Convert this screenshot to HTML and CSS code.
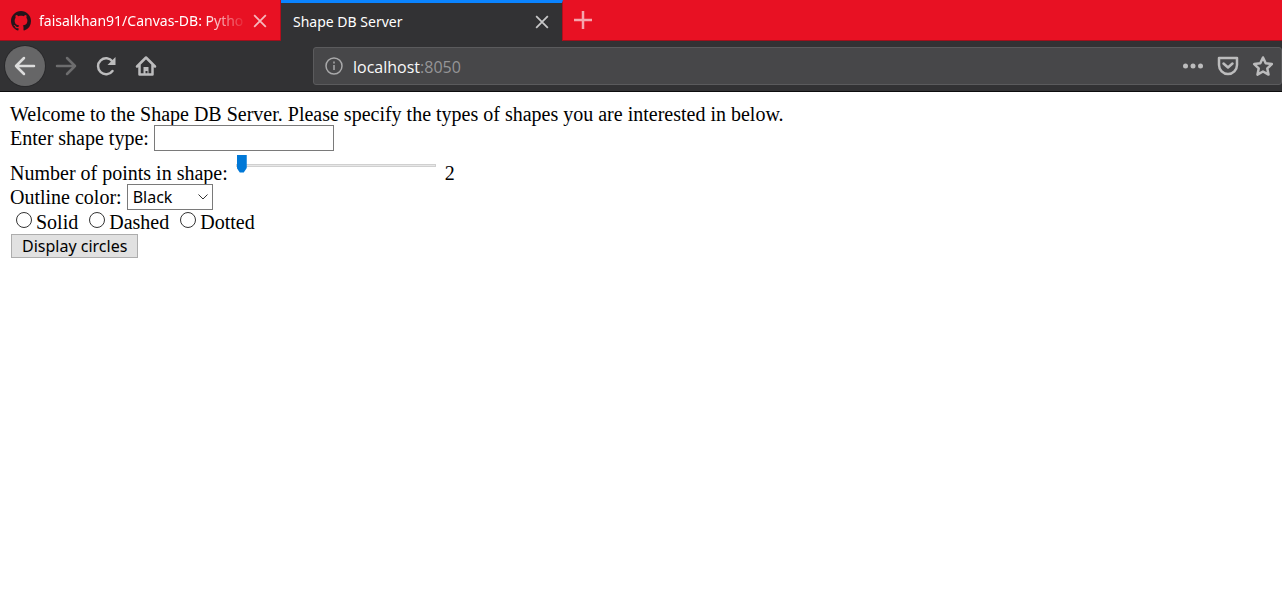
FILE: index.html
```html
<!DOCTYPE html>
<html lang="en">
<head>
<meta charset="utf-8">
<title>Shape DB Server</title>
<link rel="stylesheet" href="styles.css">
</head>
<body>
<header class="browser">
  <div class="tabs">
    <div class="tab">
      <svg class="github" width="20" height="20" viewBox="0 0 16 16"><path fill="#24141a" d="M8 0C3.58 0 0 3.58 0 8c0 3.54 2.29 6.53 5.47 7.59.4.07.55-.17.55-.38 0-.19-.01-.82-.01-1.49-2.01.37-2.53-.49-2.69-.94-.09-.23-.48-.94-.82-1.13-.28-.15-.68-.52-.01-.53.63-.01 1.08.58 1.23.82.72 1.21 1.87.87 2.33.66.07-.52.28-.87.51-1.07-1.78-.2-3.64-.89-3.64-3.95 0-.87.31-1.59.82-2.15-.08-.2-.36-1.02.08-2.12 0 0 .67-.21 2.2.82.64-.18 1.32-.27 2-.27s1.36.09 2 .27c1.53-1.04 2.2-.82 2.2-.82.44 1.1.16 1.92.08 2.12.51.56.82 1.27.82 2.15 0 3.07-1.87 3.75-3.65 3.95.29.25.54.73.54 1.48 0 1.07-.01 1.93-.01 2.2 0 .21.15.46.55.38A8.01 8.01 0 0 0 16 8c0-4.42-3.58-8-8-8z"/></svg>
      <span class="tab-title faded">faisalkhan91/Canvas-DB: Pytho</span>
      <button class="close" aria-label="Close tab"><svg width="14" height="14" viewBox="0 0 12 12"><path d="M1 1l10 10M11 1L1 11"/></svg></button>
    </div>
    <div class="tab active">
      <span class="tab-title">Shape DB Server</span>
      <button class="close" aria-label="Close tab"><svg width="14" height="14" viewBox="0 0 12 12"><path d="M1 1l10 10M11 1L1 11"/></svg></button>
    </div>
    <button class="new-tab" aria-label="New tab"><svg width="18" height="18" viewBox="0 0 18 18"><path d="M9 0v18M0 9h18"/></svg></button>
  </div>
  <nav class="toolbar">
    <button class="tool back" aria-label="Back"><svg width="22" height="22" viewBox="0 0 22 22"><path d="M20 11H2M10 3l-8 8 8 8"/></svg></button>
    <button class="tool forward" aria-label="Forward"><svg width="22" height="22" viewBox="0 0 22 22"><path d="M2 11h18M12 3l8 8-8 8"/></svg></button>
    <button class="tool" aria-label="Reload"><svg width="22" height="22" viewBox="0 0 22 22"><path d="M17.500 16A8 8 0 1 1 17.500 6.500"/><path class="solid" d="M20.500 2v8h-8z"/></svg></button>
    <button class="tool" aria-label="Home"><svg width="22" height="22" viewBox="0 0 22 22"><path d="M2 11.500L11 2.500l9 9M4.500 10v9.500h13V10"/><path class="solid" d="M8.500 19v-7h5v7h-1v-3h-2v3z"/></svg></button>
    <div class="address">
      <svg class="info" width="18" height="18" viewBox="0 0 18 18"><circle cx="9" cy="9" r="8"/><path d="M9 8v5M9 4.500v2"/></svg>
      <span class="url">localhost<span class="port">:8050</span></span>
      <button class="action" aria-label="Page actions"><svg width="22" height="22" viewBox="0 0 22 22"><g class="solid"><circle cx="3.500" cy="11" r="2.500"/><circle cx="11" cy="11" r="2.500"/><circle cx="18.500" cy="11" r="2.500"/></g></svg></button>
      <button class="action" aria-label="Save to Pocket"><svg width="22" height="22" viewBox="0 0 22 22"><path d="M2 3h18v7a9 9 0 0 1-18 0zM6.500 8.500l4.500 4 4.500-4"/></svg></button>
      <button class="action" aria-label="Bookmark"><svg width="22" height="22" viewBox="0 0 22 22"><path d="M11 2.500l2.700 5.800 6.100.8-4.500 4.300 1.200 6.200-5.500-3.100-5.500 3.100 1.200-6.200-4.500-4.300 6.100-.8z"/></svg></button>
    </div>
  </nav>
</header>
<main class="page">
  <p class="intro">Welcome to the Shape DB Server. Please specify the types of shapes you are interested in below.</p>
  <form>
    <div class="row"><label for="type">Enter shape type:</label><input class="text" id="type" type="text"></div>
    <div class="row points"><label for="points">Number of points in shape:</label><input class="range" id="points" type="range" min="2" max="20" value="2"><output for="points">2</output></div>
    <div class="row"><label for="color">Outline color:</label>
      <span class="select-box"><select id="color"><option>Black</option></select><svg class="chevron" width="10" height="6" viewBox="0 0 10 6"><path d="M0.500 0.500L5 5l4.500-4.500"/></svg></span></div>
    <div class="row radios">
      <label><input type="radio" name="line">Solid</label>
      <label><input type="radio" name="line">Dashed</label>
      <label><input type="radio" name="line">Dotted</label>
    </div>
    <button class="submit" type="button">Display circles</button>
  </form>
</main>
</body>
</html>
```
FILE: styles.css
```css
* { box-sizing: border-box; }
body { margin: 0; background: #fff; color: #000; font: 20px/22px "Liberation Serif", serif; }
svg { display: block; fill: none; stroke: currentColor; stroke-width: 2; flex: none; }
.solid { fill: currentColor; stroke: none; }
.browser { background: #323234; color: #bcbcbd; border-bottom: 1px solid #0c0c0d; font-family: "Open Sans", "Noto Sans", sans-serif; }
.browser button { display: flex; align-items: center; justify-content: center; padding: 0; border: 0; background: none; color: inherit; }
.tabs { display: flex; height: 41px; background: #e81123; border-bottom: 1px solid #a00f1c; }
.tab { display: flex; align-items: center; width: 281px; padding: 2px 13px 0 11px; border-right: 1px solid #b10e1c; color: #fff; }
.tab.active { width: 282px; height: 41px; padding-top: 0; padding-left: 12px; background: #323234; border-top: 3px solid #0a84ff; }
.github { margin-right: 8px; stroke: none; }
.tab-title { flex: 1; overflow: hidden; white-space: nowrap; font-family: "Noto Sans", sans-serif; font-size: 14px; }
.faded { -webkit-mask-image: linear-gradient(to right, #000 80%, transparent); mask-image: linear-gradient(to right, #000 80%, transparent); }
.tab .close { width: 14px; height: 24px; margin-left: 6px; color: #f6b8bd; }
.close svg { stroke-width: 1.5; }
.tab.active .close { color: #c8c8c9; }
.browser .new-tab { width: 40px; color: #f6a5ac; }
.new-tab svg { stroke-width: 2.5; }
.toolbar { display: flex; align-items: center; height: 50px; padding-left: 5px; }
.tool { width: 40px; height: 40px; }
.forward { margin-left: 1px; }
.tool svg, .action svg { stroke-width: 2.5; stroke-linejoin: round; stroke-linecap: round; }
.browser .back { background: #666667; color: #dcdcdc; border-radius: 50%; box-shadow: 0 0 0 1px #29292b; }
.browser .forward { color: #6d6d6e; }
.address { display: flex; flex: 1; align-items: center; height: 38px; margin-left: 147px; padding: 0 7px 0 11px; border: 1px solid #5b5b5d; border-radius: 3px; background: #474749; }
.info { stroke-width: 1.5; color: #a9a9aa; }
.url { flex: 1; margin-left: 10px; padding-top: 2px; color: #f9f9fa; font-size: 16px; }
.port { color: #959597; }
.action { width: 22px; height: 30px; margin-left: 13px; }
.page { padding: 11px 10px; }
.intro { margin: 0; }
.row { display: flex; align-items: center; min-height: 26px; }
.text { width: 180px; height: 26px; margin-left: 5px; border: 1px solid #7a7a7a; background: #fff; }
.points { align-items: flex-end; height: 33px; }
.range { align-self: flex-start; appearance: none; width: 200px; height: 28px; margin: 0 9px 0 8px; background: none; }
.range::-webkit-slider-runnable-track { height: 3px; border: 1px solid #d0d0d0; background: #e7e7e7; }
.range::-webkit-slider-thumb { appearance: none; width: 10px; height: 18px; margin-top: -10px; background: #0078d7; clip-path: polygon(0 0, 100% 0, 100% 75%, 70% 100%, 30% 100%, 0 75%); }
.select-box { display: grid; align-items: center; margin-left: 5px; }
select { grid-area: 1 / 1; appearance: none; width: 86px; height: 26px; padding: 0 20px 0 5px; border: 1px solid #7a7a7a; border-radius: 0; background: #fff; color: #000; font: 16px "Noto Sans", sans-serif; }
.chevron { grid-area: 1 / 1; justify-self: end; margin-right: 5px; stroke-width: 1; color: #333; pointer-events: none; }
.radios { min-height: 24px; gap: 11px; padding-left: 6px; }
.radios label { display: flex; align-items: center; }
.radios input { appearance: none; width: 16px; height: 16px; margin: 0 4px 4px 0; border: 1px solid #333; border-radius: 50%; }
.radios input:checked { background: #333; box-shadow: inset 0 0 0 3px #fff; }
.submit { display: block; height: 24px; margin-left: 1px; padding: 0 10px; border: 1px solid #adadad; background: #e1e1e1; color: #000; font: 16px/22px "Noto Sans", sans-serif; }
```
